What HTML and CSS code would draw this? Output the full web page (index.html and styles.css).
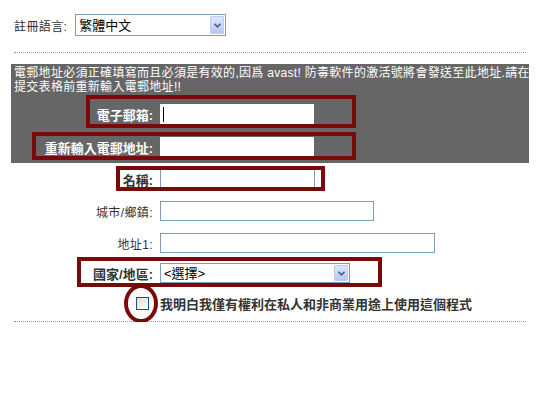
FILE: index.html
```html
<!DOCTYPE html>
<html lang="zh-Hant">
<head>
  <meta charset="UTF-8" />
  <title>avast! 註冊</title>
  <link rel="stylesheet" href="styles.css">
</head>
<body>
  <div class="page">
    <div class="lang-row">
      <label for="lang">註冊語言:</label>
      <span class="select-wrap lang-select">
        <select id="lang"><option>繁體中文</option></select>
        <span class="select-arrow"><svg width="7" height="5" viewBox="0 0 7 5"><path d="M0.5 0.8 L3.5 3.8 L6.5 0.8" fill="none" stroke="#4d6185" stroke-width="1.6"/></svg></span>
      </span>
    </div>

    <hr class="dots">

    <div class="notice">
      <p class="notice-text">電郵地址必須正確填寫而且必須是有效的,因爲 avast! 防毒軟件的激活號將會發送至此地址.請在<br>提交表格前重新輸入電郵地址!!</p>

      <div class="row row-email">
        <label class="label strong" for="email">電子郵箱:</label>
        <input class="field short caret" id="email" type="text">
        <span class="mark mark-email"></span>
      </div>

      <div class="row row-confirm">
        <label class="label strong" for="email2">重新輸入電郵地址:</label>
        <input class="field short" id="email2" type="text">
        <span class="mark mark-confirm"></span>
      </div>
    </div>

    <div class="row row-name">
      <label class="label strong" for="name">名稱:</label>
      <input class="field name" id="name" type="text">
      <span class="mark mark-name"></span>
    </div>

    <div class="row row-city">
      <label class="label" for="city">城市/鄉鎮:</label>
      <input class="field city" id="city" type="text">
    </div>

    <div class="row row-address">
      <label class="label" for="addr">地址1:</label>
      <input class="field address" id="addr" type="text">
    </div>

    <div class="row row-country">
      <label class="label strong" for="country">國家/地區:</label>
      <span class="select-wrap country-select">
        <select id="country"><option>&lt;選擇&gt;</option></select>
        <span class="select-arrow"><svg width="7" height="5" viewBox="0 0 7 5"><path d="M0.5 0.8 L3.5 3.8 L6.5 0.8" fill="none" stroke="#4d6185" stroke-width="1.6"/></svg></span>
      </span>
      <span class="mark mark-country"></span>
    </div>

    <div class="row row-agree">
      <span class="label check-cell"><input type="checkbox" class="check" id="agree"></span>
      <label class="strong agree-text" for="agree">我明白我僅有權利在私人和非商業用途上使用這個程式</label>
      <span class="mark-circle"></span>
    </div>

    <hr class="dots dots-bottom">
  </div>
</body>
</html>
```

FILE: styles.css
```css
body {
  margin: 0;
  background-color: #fff;
}

.page {
  width: 518px;
  margin-left: 11px;
  font-family: "Liberation Sans", "Noto Sans CJK TC", sans-serif;
  font-size: 12px;
  color: #333;
}

.lang-row {
  display: flex;
  align-items: center;
  height: 22px;
  padding-top: 14px;
  padding-left: 3px;
}

.lang-row label {
  margin-right: 8px;
  letter-spacing: 0.4px;
}

.select-wrap {
  position: relative;
  display: inline-block;
  height: 22px;
}

.select-wrap select {
  appearance: none;
  -webkit-appearance: none;
  width: 100%;
  height: 100%;
  border: 1px solid #7f9db9;
  border-radius: 0;
  background: #fff;
  padding: 0 0 0 3px;
  font-family: inherit;
  font-size: 13px;
  color: #000;
  outline: none;
}

.select-arrow {
  position: absolute;
  top: 2px;
  right: 2px;
  bottom: 2px;
  width: 14px;
  box-sizing: border-box;
  border: 1px solid #bccdf5;
  border-radius: 1px;
  background: linear-gradient(#e0e8fc, #b5c8f3);
  display: flex;
  align-items: center;
  justify-content: center;
}

.lang-select {
  width: 151px;
}

.dots {
  border: 0;
  border-top: 1px dotted #999;
  height: 0;
  margin: 16px 3px 0;
}

.notice {
  background-color: #666;
  color: #fff;
  margin-top: 11px;
  padding: 2px 0 6px;
}

.notice-text {
  margin: 0;
  padding-left: 3px;
  line-height: 14px;
  letter-spacing: 0.3px;
  white-space: nowrap;
}

.row {
  position: relative;
  display: flex;
  align-items: center;
  height: 20px;
}

.label {
  flex: none;
  width: 142px;
  margin-right: 7px;
  text-align: right;
  white-space: nowrap;
}

.strong {
  font-weight: bold;
  font-size: 13px;
}

.field {
  box-sizing: border-box;
  height: 20px;
  border: 1px solid #7f9db9;
  background-color: #fff;
  padding: 0 2px;
  font: inherit;
  outline: none;
}

.notice .field {
  border-color: #fff;
}

.caret {
  background: linear-gradient(#000, #000) 2px 2px / 1px 15px no-repeat #fff;
}

.short { width: 154px; }
.name { width: 155px; }
.city { width: 214px; }
.address { width: 275px; }

.row-email { margin-top: 10px; }
.row-confirm { margin-top: 13px; }
.row-name { margin-top: 6px; }
.row-city { margin-top: 12px; }
.row-address { margin-top: 12px; }
.row-country { margin-top: 10px; }

.row-city .label,
.row-address .label {
  letter-spacing: 0.4px;
}

.country-select {
  width: 190px;
  height: 20px;
}

.row-agree {
  margin-top: 14px;
  height: 13px;
}

.check-cell {
  display: flex;
  justify-content: flex-end;
  padding-right: 4px;
  box-sizing: border-box;
}

.check {
  appearance: none;
  -webkit-appearance: none;
  width: 13px;
  height: 13px;
  margin: 0;
  border: 1px solid #1c5180;
  background: linear-gradient(135deg, #dcdcd7, #fff);
}

.agree-text {
  color: #333;
  white-space: nowrap;
}

/* annotation highlights */
.mark {
  position: absolute;
  box-sizing: border-box;
  border: 4px solid #7a0a0a;
  pointer-events: none;
}

.mark-email { left: 75px; top: -9px; width: 270px; height: 33px; }
.mark-confirm { left: 21px; top: -5px; width: 324px; height: 28px; }
.mark-name { left: 105px; top: -3px; width: 209px; height: 25px; }
.mark-country { left: 66px; top: -6px; width: 305px; height: 30px; }

.mark-circle {
  position: absolute;
  left: 113px;
  top: -13px;
  width: 34px;
  height: 39px;
  box-sizing: border-box;
  border: 4px solid #7a0a0a;
  border-radius: 50%;
  pointer-events: none;
}

.dots-bottom {
  margin-top: 11px;
}
```
